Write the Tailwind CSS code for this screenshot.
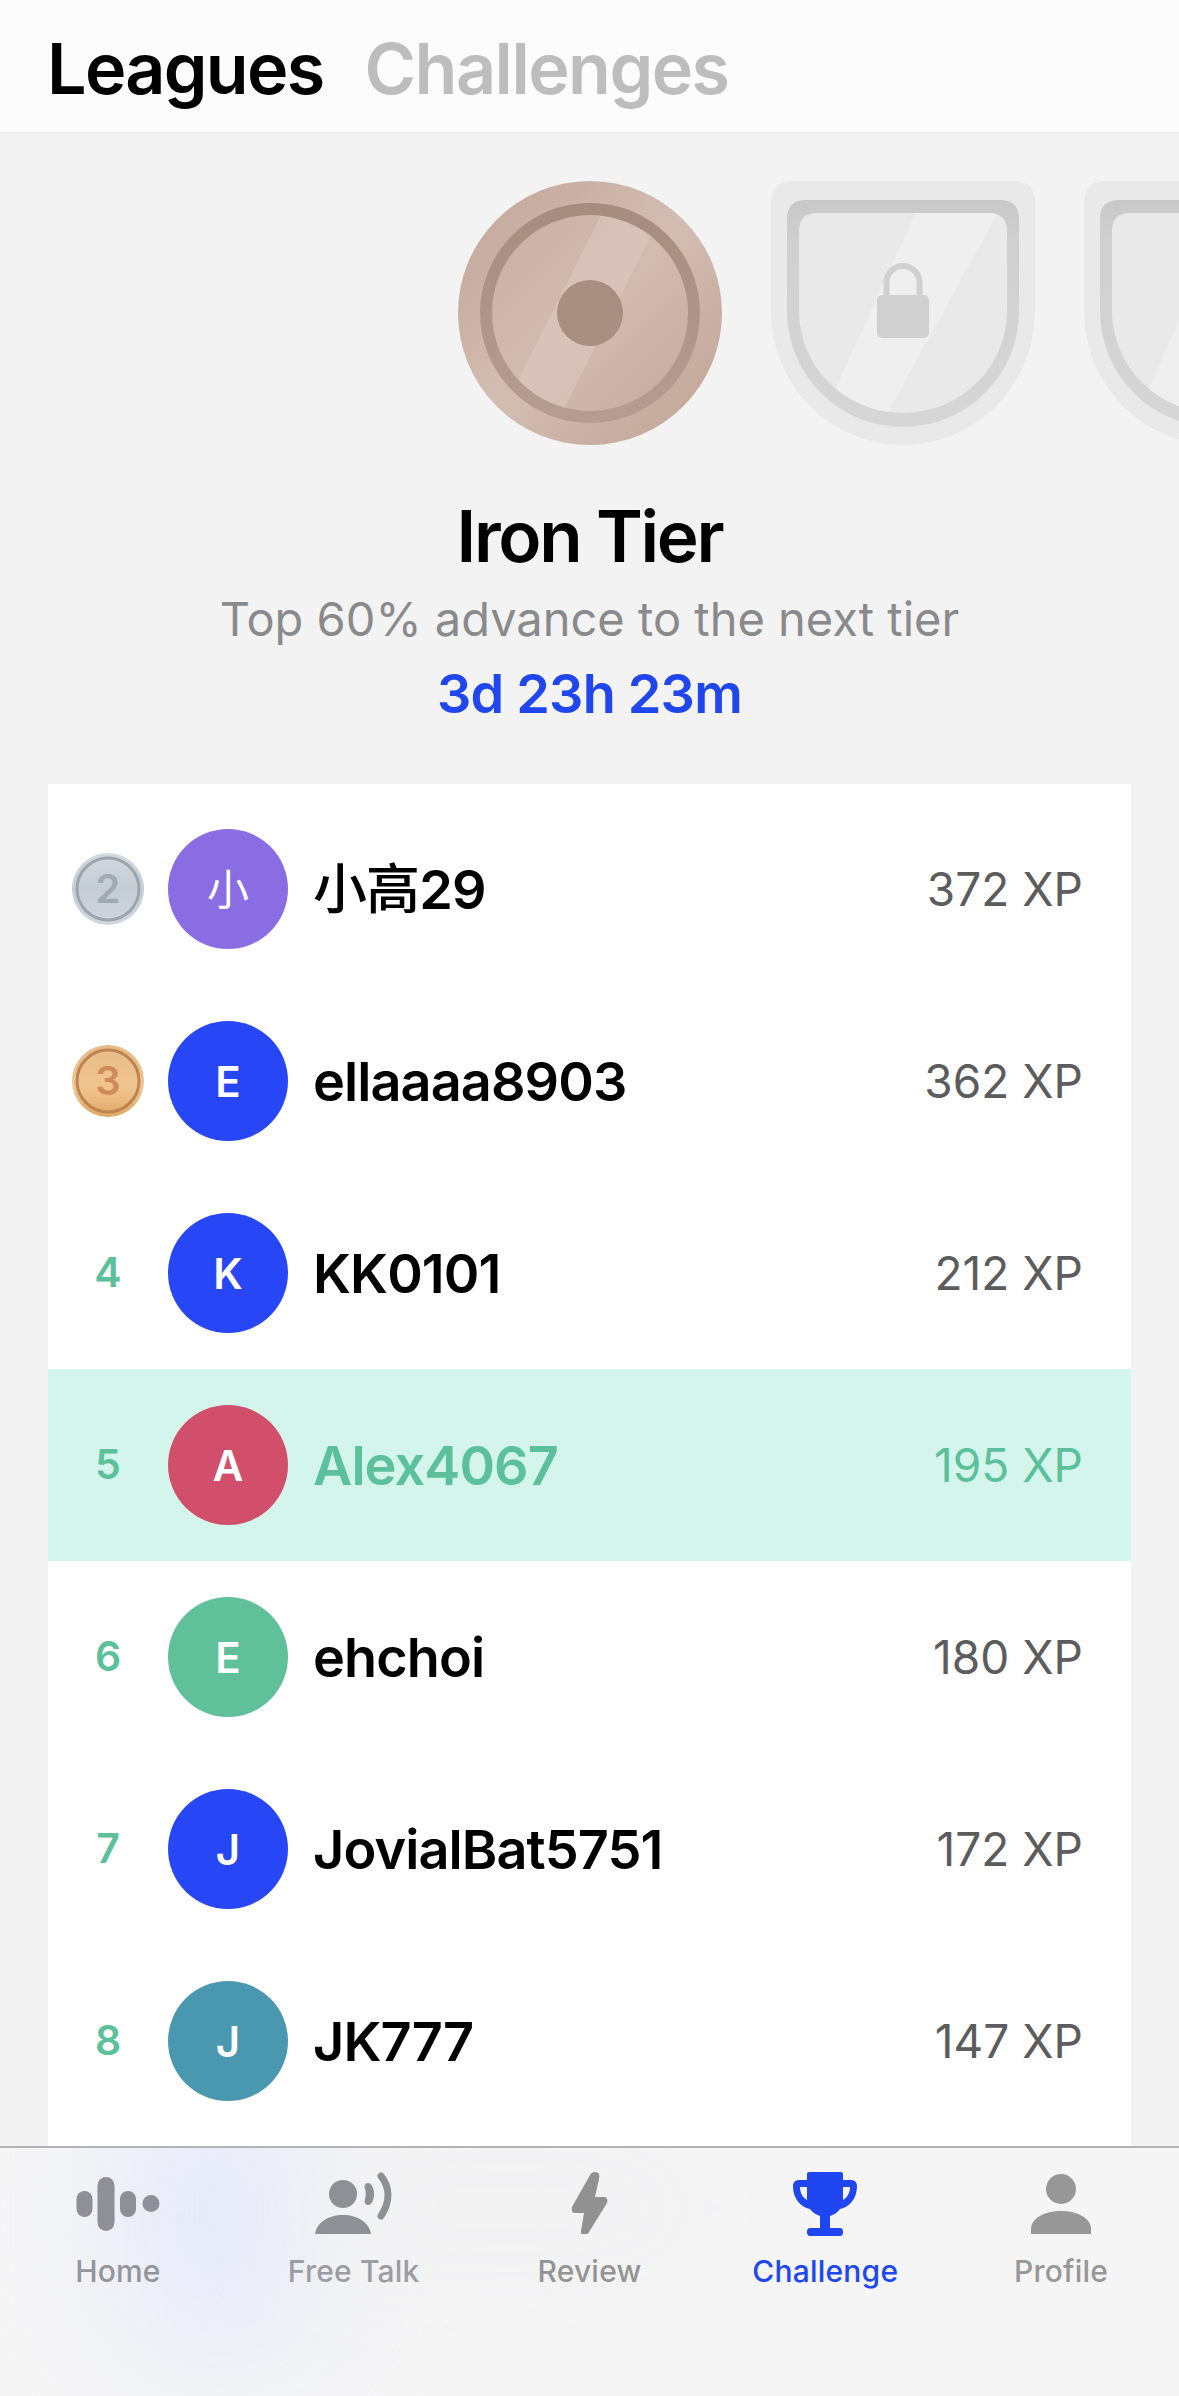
<!doctype html>
<html><head><meta charset="utf-8"><script src="https://cdn.jsdelivr.net/npm/@tailwindcss/browser@4"></script></head>
<body class="m-0">
<div class="relative w-[1179px] h-[2396px] overflow-hidden bg-[#f3f3f4] font-['Inter','Noto_Sans_CJK_SC',sans-serif]">

<header class="h-[134px] bg-[#fcfcfc] border-b-2 border-[#eeeeee] flex items-start gap-[41px] pl-[47px] pt-[25px]">
  <span class="text-[70px] leading-[88px] font-semibold text-black tracking-[-1.7px]">Leagues</span>
  <span class="text-[70px] leading-[88px] font-semibold text-[#bdbdbd] tracking-[-1.5px]">Challenges</span>
</header>

<section class="flex gap-[49px] pl-[458px] pt-[47px] overflow-hidden">
  <svg class="shrink-0 blur-[0.7px]" width="264" height="264" viewBox="0 0 264 264">
    <defs>
      <linearGradient id="m1" x1="0" y1="0" x2="1" y2="1"><stop offset="0" stop-color="#c2a598"/><stop offset=".5" stop-color="#d3bdb2"/><stop offset="1" stop-color="#c0a295"/></linearGradient>
      <linearGradient id="m2" x1="0" y1="0" x2="1" y2="1"><stop offset="0" stop-color="#c9b0a4"/><stop offset=".5" stop-color="#d2bbb0"/><stop offset="1" stop-color="#c6ac9f"/></linearGradient>
      <linearGradient id="m3" x1="0" y1="0" x2="0" y2="1"><stop offset="0" stop-color="#a58c7f"/><stop offset="1" stop-color="#b59e91"/></linearGradient>
      <clipPath id="mc"><circle cx="132" cy="132" r="98"/></clipPath>
    </defs>
    <circle cx="132" cy="132" r="132" fill="url(#m1)"/>
    <circle cx="132" cy="132" r="110" fill="url(#m3)"/>
    <circle cx="132" cy="132" r="98" fill="url(#m2)"/>
    <polygon clip-path="url(#mc)" points="145,30 205,30 100,240 40,240" fill="#dccbc3" opacity=".55"/>
    <circle cx="132" cy="132" r="33" fill="#a88f82"/>
  </svg>
  <svg class="shrink-0 blur-[0.7px]" width="264" height="264" viewBox="0 0 264 264">
    <defs><clipPath id="s1"><path d="M28 50Q28 32 46 32H218Q236 32 236 50V130A104 102 0 0 1 28 130Z"/></clipPath>
    <linearGradient id="sr" x1="0" y1="0" x2="0" y2="1"><stop offset="0" stop-color="#c8c8c8"/><stop offset=".2" stop-color="#d0d0d0"/><stop offset="1" stop-color="#d6d6d6"/></linearGradient></defs>
    <path d="M0 22Q0 0 22 0H242Q264 0 264 22V130A132 134 0 0 1 0 130Z" fill="#e9e9e9"/>
    <path d="M16 38Q16 19 35 19H229Q248 19 248 38V130A116 116 0 0 1 16 130Z" fill="url(#sr)"/>
    <path d="M28 50Q28 32 46 32H218Q236 32 236 50V130A104 102 0 0 1 28 130Z" fill="#e9e9e9"/>
    <polygon clip-path="url(#s1)" points="145,30 228,30 112,240 50,240" fill="#efefef"/>
    <rect x="106" y="114" width="52" height="43" rx="5" fill="#d0d0d0"/>
    <path d="M115.5 116V101.5A16.5 16.5 0 0 1 148.5 101.5V116" fill="none" stroke="#d0d0d0" stroke-width="6"/>
  </svg>
  <svg class="shrink-0 blur-[0.7px]" width="264" height="264" viewBox="0 0 264 264">
    <defs><clipPath id="s2"><path d="M28 50Q28 32 46 32H218Q236 32 236 50V130A104 102 0 0 1 28 130Z"/></clipPath></defs>
    <path d="M0 22Q0 0 22 0H242Q264 0 264 22V130A132 134 0 0 1 0 130Z" fill="#e9e9e9"/>
    <path d="M16 38Q16 19 35 19H229Q248 19 248 38V130A116 116 0 0 1 16 130Z" fill="url(#sr)"/>
    <path d="M28 50Q28 32 46 32H218Q236 32 236 50V130A104 102 0 0 1 28 130Z" fill="#e9e9e9"/>
    <polygon clip-path="url(#s2)" points="145,30 228,30 112,240 50,240" fill="#efefef"/>
  </svg>
</section>

<section class="flex flex-col items-center mt-[49px]">
  <h1 class="text-[71px] leading-[84px] font-semibold text-black tracking-[-2.3px]">Iron Tier</h1>
  <p class="text-[47px] leading-[56px] mt-[13px] text-[#8a8a8c]">Top 60% advance to the next tier</p>
  <p class="text-[54px] leading-[62px] mt-[16px] font-semibold text-[#2046ee] tracking-[-0.8px]">3d 23h 23m</p>
</section>

<section class="mx-[48px] mt-[59px] bg-white pt-[9px] pb-[20px]">
  <div class="h-[192px] flex items-center pr-[48px]">
    <div class="w-[120px] flex justify-center">
      <svg width="72" height="72" viewBox="0 0 72 72"><defs><linearGradient id="g2" x1="0" y1="0" x2="0" y2="1"><stop offset="0" stop-color="#d2d9e0"/><stop offset=".5" stop-color="#c4ccd5"/><stop offset="1" stop-color="#d0d7df"/></linearGradient></defs><circle cx="36" cy="36" r="36" fill="url(#g2)"/><circle cx="36" cy="36" r="31" fill="none" stroke="#9da4ab" stroke-width="3"/><text x="36" y="50" text-anchor="middle" font-size="40" font-weight="600" fill="#a1a9b3">2</text></svg>
    </div>
    <div class="w-[120px] h-[120px] rounded-full bg-[#8a6de3] flex items-center justify-center text-white text-[42px] font-normal shrink-0">小</div>
    <span class="ml-[25px] text-[54px] font-[560] text-black tracking-[-0.9px]">小高29</span>
    <span class="ml-auto text-[46px] text-[#5c5c5e]">372 XP</span>
  </div>
  <div class="h-[192px] flex items-center pr-[48px]">
    <div class="w-[120px] flex justify-center">
      <svg width="72" height="72" viewBox="0 0 72 72"><defs><linearGradient id="g3" x1="0" y1="0" x2="0" y2="1"><stop offset="0" stop-color="#e6bb85"/><stop offset=".6" stop-color="#efc48e"/><stop offset="1" stop-color="#dfa866"/></linearGradient></defs><circle cx="36" cy="36" r="36" fill="url(#g3)"/><circle cx="36" cy="36" r="31" fill="none" stroke="#bd8452" stroke-width="3"/><text x="36" y="50" text-anchor="middle" font-size="40" font-weight="600" fill="#cf8a5a">3</text></svg>
    </div>
    <div class="w-[120px] h-[120px] rounded-full bg-[#2746f5] flex items-center justify-center text-white text-[42px] font-semibold shrink-0">E</div>
    <span class="ml-[25px] text-[54px] font-[560] text-black tracking-[-0.9px]">ellaaaa8903</span>
    <span class="ml-auto text-[46px] text-[#5c5c5e]">362 XP</span>
  </div>
  <div class="h-[192px] flex items-center pr-[48px]">
    <div class="w-[120px] text-center text-[41px] font-semibold text-[#5cc19b]">4</div>
    <div class="w-[120px] h-[120px] rounded-full bg-[#2746f5] flex items-center justify-center text-white text-[42px] font-semibold shrink-0">K</div>
    <span class="ml-[25px] text-[54px] font-[560] text-black tracking-[-0.9px]">KK0101</span>
    <span class="ml-auto text-[46px] text-[#5c5c5e]">212 XP</span>
  </div>
  <div class="h-[192px] flex items-center pr-[48px] bg-[#d4f5ec]">
    <div class="w-[120px] text-center text-[41px] font-semibold text-[#5cc19b]">5</div>
    <div class="w-[120px] h-[120px] rounded-full bg-[#d14f6a] flex items-center justify-center text-white text-[42px] font-semibold shrink-0">A</div>
    <span class="ml-[25px] text-[54px] font-[560] text-[#5cc19b] tracking-[-0.9px]">Alex4067</span>
    <span class="ml-auto text-[46px] text-[#5cc19b]">195 XP</span>
  </div>
  <div class="h-[192px] flex items-center pr-[48px]">
    <div class="w-[120px] text-center text-[41px] font-semibold text-[#5cc19b]">6</div>
    <div class="w-[120px] h-[120px] rounded-full bg-[#5fc09a] flex items-center justify-center text-white text-[42px] font-semibold shrink-0">E</div>
    <span class="ml-[25px] text-[54px] font-[560] text-black tracking-[-0.9px]">ehchoi</span>
    <span class="ml-auto text-[46px] text-[#5c5c5e]">180 XP</span>
  </div>
  <div class="h-[192px] flex items-center pr-[48px]">
    <div class="w-[120px] text-center text-[41px] font-semibold text-[#5cc19b]">7</div>
    <div class="w-[120px] h-[120px] rounded-full bg-[#2746f5] flex items-center justify-center text-white text-[42px] font-semibold shrink-0">J</div>
    <span class="ml-[25px] text-[54px] font-[560] text-black tracking-[-0.9px]">JovialBat5751</span>
    <span class="ml-auto text-[46px] text-[#5c5c5e]">172 XP</span>
  </div>
  <div class="h-[192px] flex items-center pr-[48px]">
    <div class="w-[120px] text-center text-[41px] font-semibold text-[#5cc19b]">8</div>
    <div class="w-[120px] h-[120px] rounded-full bg-[#4a97b0] flex items-center justify-center text-white text-[42px] font-semibold shrink-0">J</div>
    <span class="ml-[25px] text-[54px] font-[560] text-black tracking-[-0.9px]">JK777</span>
    <span class="ml-auto text-[46px] text-[#5c5c5e]">147 XP</span>
  </div>
</section>

<nav class="absolute left-0 right-0 bottom-0 h-[250px] border-t-2 border-[#b4b4b4] bg-[#f5f5f6] overflow-hidden">
  <div class="absolute left-[130px] top-[-60px] w-[170px] h-[260px] rounded-full bg-[#e4e9fb] blur-3xl"></div>
  <div class="absolute left-[300px] top-[0px] w-[420px] h-[120px] rounded-full bg-[#f1f1f2] blur-3xl"></div>
  <div class="absolute left-0 right-0 top-[22px] grid grid-cols-5 w-full">
    <div class="flex flex-col items-center relative">
      <svg width="90" height="64" viewBox="0 0 90 64" fill="#8e9097"><rect x="3.5" y="21" width="16" height="26" rx="8"/><rect x="24.5" y="7" width="17" height="54" rx="8.5"/><rect x="47" y="21" width="16" height="26" rx="8"/><circle cx="78" cy="33.5" r="8.5"/></svg>
      <span class="mt-[19px] text-[30px] leading-[36px] font-medium text-[#94959b] tracking-[0.2px]">Home</span>
    </div>
    <div class="flex flex-col items-center relative">
      <svg width="90" height="64" viewBox="0 0 90 64" fill="#8f9096"><circle cx="34" cy="24" r="14"/><path d="M6 66C6 54 18 45 34 45S62 54 62 66Z"/><path d="M59 13C63 13 65 19 65 24S63 35 59 35C56 35 55 32 56 29C57 26 57 22 56 19C55 16 56 13 59 13Z"/><path d="M72 6C76 11 79 18 79 25S76 40 72 46" fill="none" stroke="#8f9096" stroke-width="7" stroke-linecap="round"/></svg>
      <span class="mt-[19px] text-[30px] leading-[36px] font-medium text-[#9c9da2] tracking-[0.2px]">Free Talk</span>
    </div>
    <div class="flex flex-col items-center relative">
      <svg width="90" height="64" viewBox="0 0 90 64" fill="#919191"><path d="M51 2C55 2 56 5 55 9L51 27H60C63 27 64 30 63 33L45 62C42 67 36 66 37 61L40 43H31C28 43 27 40 28 37L46 5C47 3 49 2 51 2Z"/></svg>
      <span class="mt-[19px] text-[30px] leading-[36px] font-medium text-[#949494] tracking-[0.2px]">Review</span>
    </div>
    <div class="flex flex-col items-center relative">
      <svg width="90" height="66" viewBox="0 0 90 66" fill="#2046f2" class="-mb-[2px]"><path d="M29 2H61Q63 2 63 4V10H71C74 10 77 12 77 16C77 28 70 37 60 39C57 43 53 45 50 46V58H60Q63 58 63 62T60 66H30Q27 66 27 62T30 58H40V46C37 45 33 43 30 39C20 37 13 28 13 16C13 12 16 10 19 10H27V4Q27 2 29 2ZM27 17H20C20 23 23 28 27 30ZM63 17V30C67 28 70 23 70 17Z" fill-rule="evenodd"/></svg>
      <span class="mt-[19px] text-[30px] leading-[36px] font-medium text-[#2046f2] tracking-[0.2px]">Challenge</span>
    </div>
    <div class="flex flex-col items-center relative">
      <svg width="90" height="64" viewBox="0 0 90 64" fill="#979797"><circle cx="45" cy="19" r="15"/><path d="M15 64V59C15 48 29 41 45 41S75 48 75 59V64Z"/></svg>
      <span class="mt-[19px] text-[30px] leading-[36px] font-medium text-[#979797] tracking-[0.2px]">Profile</span>
    </div>
  </div>
</nav>
</div>
</body></html>
